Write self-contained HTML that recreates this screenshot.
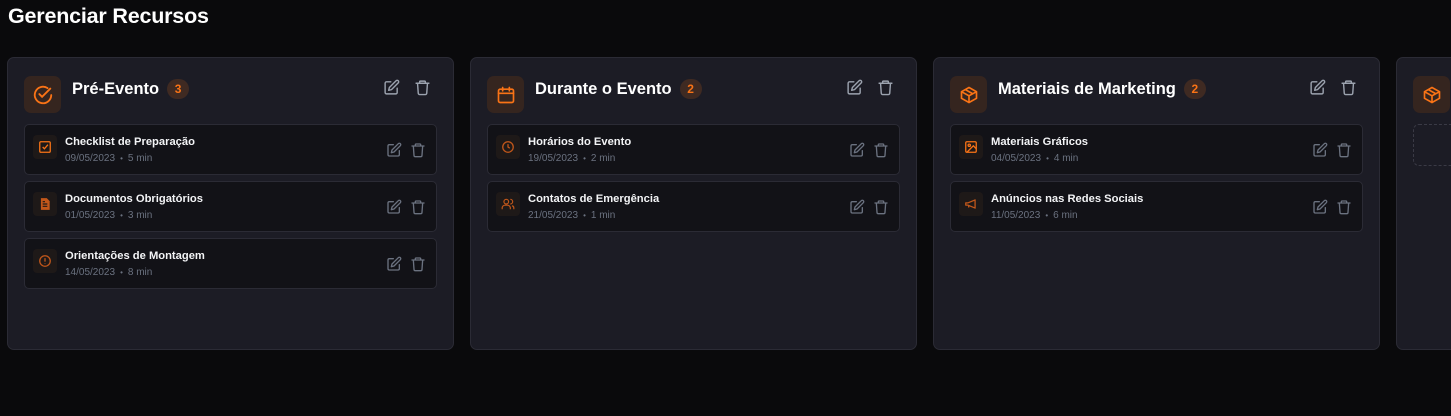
<!DOCTYPE html>
<html><head><meta charset="utf-8"><style>
*{box-sizing:border-box;margin:0;padding:0}
body{width:1451px;height:416px;background:#0a0a0c;font-family:"Liberation Sans",sans-serif;color:#fff;overflow:hidden;position:relative}
h1{position:absolute;left:8px;top:4px;font-size:21.5px;font-weight:bold;letter-spacing:-0.2px}
.col{position:absolute;top:57px;width:447px;height:293px;background:#1c1c25;border:1px solid #2b2b35;border-radius:7px}
.hicon{position:absolute;left:16px;top:18px;width:37px;height:37px;border-radius:7px;background:#35251f;display:flex;align-items:center;justify-content:center}
.htitle{position:absolute;left:64px;top:21px;font-size:16.5px;font-weight:bold;line-height:20px}
.badge{display:inline-block;margin-left:8px;height:20px;min-width:22px;padding:0 7px;border-radius:10px;background:#3f2a22;color:#f97316;font-size:12px;font-weight:bold;line-height:20px;text-align:center;vertical-align:1px}
.hact{position:absolute;top:21px;right:22px;display:flex;gap:14px}
.item{position:absolute;left:16px;width:413px;height:51px;background:#121217;border:1px solid #2b2b35;border-radius:5px}
.iicon{position:absolute;left:8px;top:10px;width:24px;height:24px;border-radius:4px;background:#1e1918;display:flex;align-items:center;justify-content:center}
.it{position:absolute;left:40px;top:11px;font-size:11.2px;font-weight:bold;color:#f3f4f6}
.im{position:absolute;left:40px;top:28px;font-size:10px;color:#6b7280}
.im span{margin:0 5px;font-size:8px}
.iact{position:absolute;right:10px;top:17px;display:flex;gap:8px}
svg{display:block}
</style></head><body>
<h1>Gerenciar Recursos</h1>

<svg width="0" height="0" style="position:absolute">
<defs>
<symbol id="edit" viewBox="0 0 24 24"><path d="M11 4H5a2 2 0 0 0-2 2v13a2 2 0 0 0 2 2h13a2 2 0 0 0 2-2v-6" fill="none" stroke="currentColor" stroke-width="2" stroke-linecap="round"/><path d="M18.5 2.5a2.1 2.1 0 0 1 3 3L12 15l-4 1 1-4z" fill="none" stroke="currentColor" stroke-width="2" stroke-linejoin="round"/></symbol>
<symbol id="trash" viewBox="0 0 24 24"><path d="M3 6h18M8 6V4a1 1 0 0 1 1-1h6a1 1 0 0 1 1 1v2M5 6l1 14a2 2 0 0 0 2 2h8a2 2 0 0 0 2-2l1-14" fill="none" stroke="currentColor" stroke-width="2" stroke-linecap="round" stroke-linejoin="round"/></symbol>
<symbol id="box" viewBox="0 0 24 24"><path d="M21 8l-9-5-9 5v8l9 5 9-5z M3 8l9 5 9-5 M12 13v8 M7.5 5.5l9 5" fill="none" stroke="currentColor" stroke-width="2" stroke-linejoin="round"/></symbol>
</defs></svg>

<div class="col" style="left:7px">
 <div class="hicon"><svg width="22" height="22" viewBox="0 0 24 24" fill="none" stroke="#f97316" stroke-width="2" stroke-linecap="round"><path d="M21 12a9 9 0 1 1-4-7.5"/><path d="M8 11l3 3 9-9"/></svg></div>
 <div class="htitle">Pré-Evento<span class="badge">3</span></div>
 <div class="hact" style="color:#9ca3af"><svg width="17" height="17"><use href="#edit"/></svg><svg width="17" height="17"><use href="#trash"/></svg></div>
 <div class="item" style="top:66px"><div class="iicon"><svg width="14" height="14" viewBox="0 0 24 24" fill="none" stroke="#f97316" stroke-width="2.2"><rect x="3" y="3" width="18" height="18" rx="2"/><path d="M8 12l3 3 6-7"/></svg></div><div class="it">Checklist de Preparação</div><div class="im">09/05/2023<span>•</span>5 min</div><div class="iact" style="color:#6b7280"><svg width="16" height="16"><use href="#edit"/></svg><svg width="16" height="16"><use href="#trash"/></svg></div></div>
 <div class="item" style="top:123px"><div class="iicon"><svg width="14" height="14" viewBox="0 0 24 24"><path d="M5 2h10l5 5v15H5z" fill="#c2571a"/><path d="M8 12h8M8 16h8M8 8h4" stroke="#1e1918" stroke-width="2"/></svg></div><div class="it">Documentos Obrigatórios</div><div class="im">01/05/2023<span>•</span>3 min</div><div class="iact" style="color:#6b7280"><svg width="16" height="16"><use href="#edit"/></svg><svg width="16" height="16"><use href="#trash"/></svg></div></div>
 <div class="item" style="top:180px"><div class="iicon"><svg width="14" height="14" viewBox="0 0 24 24" fill="none" stroke="#c2571a" stroke-width="2.2"><circle cx="12" cy="12" r="9"/><path d="M12 7v6M12 16v1"/></svg></div><div class="it">Orientações de Montagem</div><div class="im">14/05/2023<span>•</span>8 min</div><div class="iact" style="color:#6b7280"><svg width="16" height="16"><use href="#edit"/></svg><svg width="16" height="16"><use href="#trash"/></svg></div></div>
</div>

<div class="col" style="left:470px">
 <div class="hicon"><svg width="20" height="20" viewBox="0 0 24 24" fill="none" stroke="#f97316" stroke-width="2" stroke-linecap="round"><rect x="3" y="5" width="18" height="16" rx="2"/><path d="M3 10h18M8 3v4M16 3v4"/></svg></div>
 <div class="htitle">Durante o Evento<span class="badge">2</span></div>
 <div class="hact" style="color:#9ca3af"><svg width="17" height="17"><use href="#edit"/></svg><svg width="17" height="17"><use href="#trash"/></svg></div>
 <div class="item" style="top:66px"><div class="iicon"><svg width="14" height="14" viewBox="0 0 24 24" fill="none" stroke="#c2571a" stroke-width="2.2"><circle cx="12" cy="12" r="9"/><path d="M12 7v5l3 2"/></svg></div><div class="it">Horários do Evento</div><div class="im">19/05/2023<span>•</span>2 min</div><div class="iact" style="color:#6b7280"><svg width="16" height="16"><use href="#edit"/></svg><svg width="16" height="16"><use href="#trash"/></svg></div></div>
 <div class="item" style="top:123px"><div class="iicon"><svg width="14" height="14" viewBox="0 0 24 24" fill="none" stroke="#c2571a" stroke-width="2"><circle cx="9" cy="8" r="4"/><path d="M2 21v-2a5 5 0 0 1 5-5h4a5 5 0 0 1 5 5v2M16 4a4 4 0 0 1 0 8M22 21v-2a4 4 0 0 0-3-4"/></svg></div><div class="it">Contatos de Emergência</div><div class="im">21/05/2023<span>•</span>1 min</div><div class="iact" style="color:#6b7280"><svg width="16" height="16"><use href="#edit"/></svg><svg width="16" height="16"><use href="#trash"/></svg></div></div>
</div>

<div class="col" style="left:933px">
 <div class="hicon" style="color:#f97316"><svg width="20" height="20"><use href="#box"/></svg></div>
 <div class="htitle">Materiais de Marketing<span class="badge">2</span></div>
 <div class="hact" style="color:#9ca3af"><svg width="17" height="17"><use href="#edit"/></svg><svg width="17" height="17"><use href="#trash"/></svg></div>
 <div class="item" style="top:66px"><div class="iicon"><svg width="14" height="14" viewBox="0 0 24 24" fill="none" stroke="#f97316" stroke-width="2.2"><rect x="3" y="3" width="18" height="18" rx="2"/><circle cx="9" cy="9" r="2"/><path d="M21 15l-5-5L5 21"/></svg></div><div class="it">Materiais Gráficos</div><div class="im">04/05/2023<span>•</span>4 min</div><div class="iact" style="color:#6b7280"><svg width="16" height="16"><use href="#edit"/></svg><svg width="16" height="16"><use href="#trash"/></svg></div></div>
 <div class="item" style="top:123px"><div class="iicon"><svg width="14" height="14" viewBox="0 0 24 24" fill="none" stroke="#c2571a" stroke-width="2.2" stroke-linejoin="round"><path d="M3 10v4h4l12 5V5L7 10z M8 14v4"/></svg></div><div class="it">Anúncios nas Redes Sociais</div><div class="im">11/05/2023<span>•</span>6 min</div><div class="iact" style="color:#6b7280"><svg width="16" height="16"><use href="#edit"/></svg><svg width="16" height="16"><use href="#trash"/></svg></div></div>
</div>

<div class="col" style="left:1396px">
 <div class="hicon" style="color:#f97316"><svg width="20" height="20"><use href="#box"/></svg></div>
 <div style="position:absolute;left:16px;top:66px;width:413px;height:42px;border:1px dashed #3a3a45;border-radius:6px"></div>
</div>
</body></html>
